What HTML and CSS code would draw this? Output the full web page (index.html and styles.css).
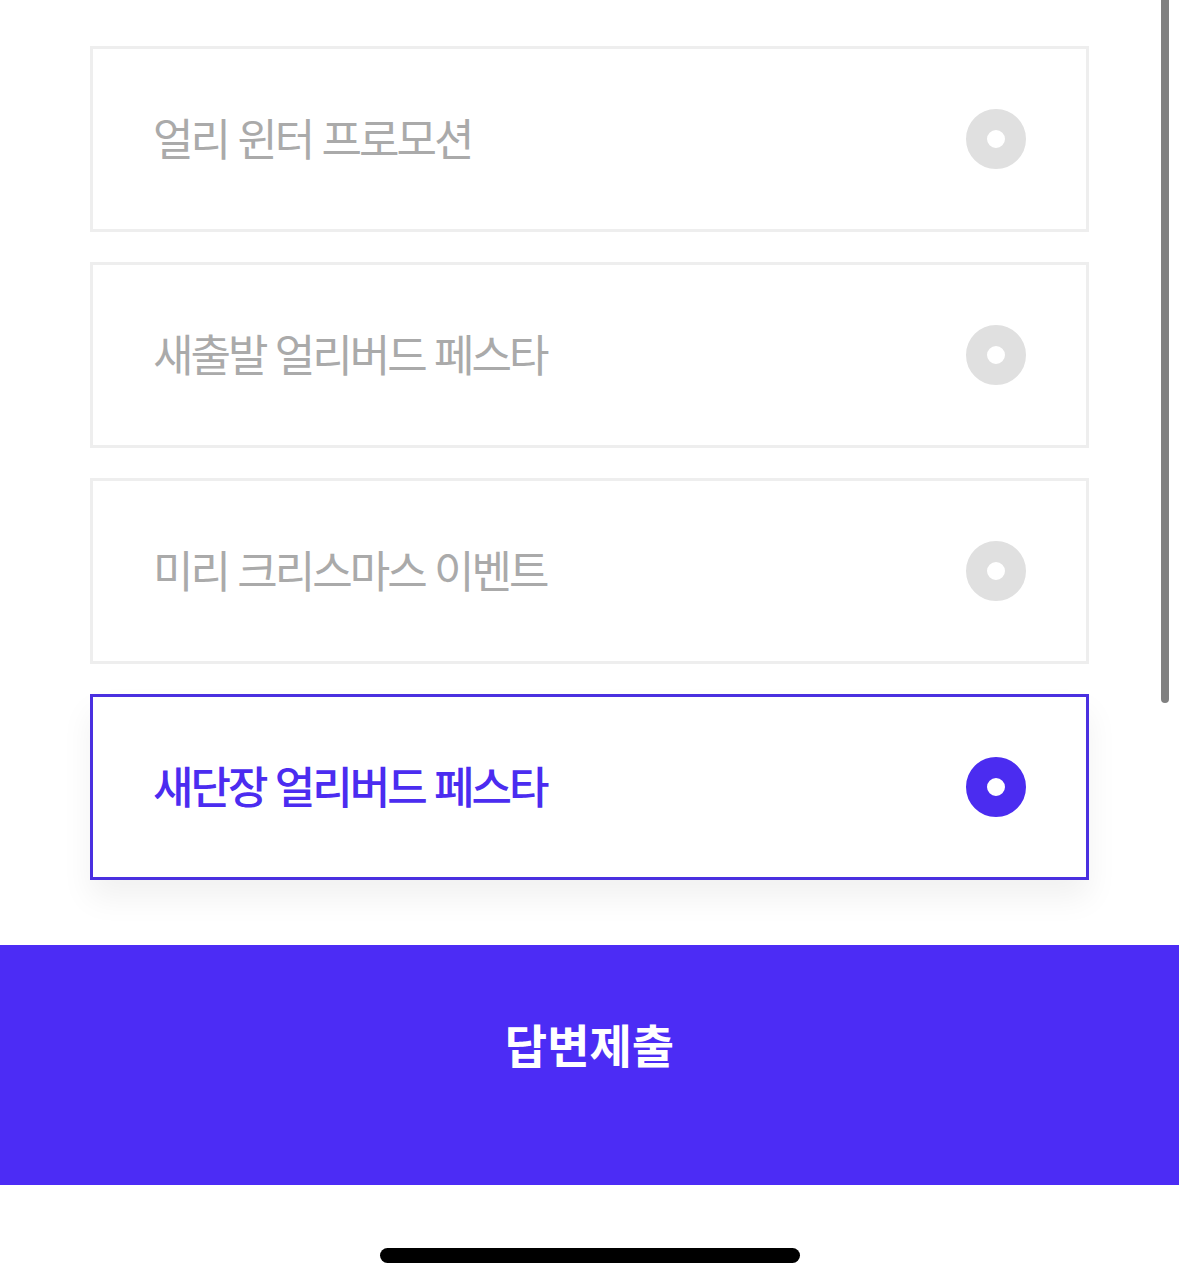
FILE: index.html
```html
<!DOCTYPE html>
<html lang="ko">
<head>
<meta charset="utf-8">
<link rel="stylesheet" href="styles.css">
</head>
<body>
<div class="screen">
  <div class="options">
    <div class="option">
      <span class="label">얼리 윈터 프로모션</span>
      <span class="radio"></span>
    </div>
    <div class="option">
      <span class="label">새출발 얼리버드 페스타</span>
      <span class="radio"></span>
    </div>
    <div class="option">
      <span class="label">미리 크리스마스 이벤트</span>
      <span class="radio"></span>
    </div>
    <div class="option selected">
      <span class="label">새단장 얼리버드 페스타</span>
      <span class="radio"></span>
    </div>
  </div>
  <button class="submit">답변제출</button>
  <div class="home-area"><span class="home-indicator"></span></div>
  <div class="scrollbar"></div>
</div>
</body>
</html>
```

FILE: styles.css
```css
html, body {
  margin: 0;
  padding: 0;
  background: #ffffff;
}
body {
  font-family: "Noto Sans CJK KR", "Noto Sans", sans-serif;
}
.screen {
  position: relative;
  width: 1179px;
  height: 1287px;
  overflow: hidden;
  display: flex;
  flex-direction: column;
}
.options {
  display: flex;
  flex-direction: column;
  gap: 30px;
  padding: 46px 90px 0;
}
.option {
  box-sizing: border-box;
  height: 186px;
  border: 3px solid #eeeeee;
  background: #fff;
  display: flex;
  align-items: center;
  justify-content: space-between;
  padding: 0 60px;
}
.label {
  font-size: 44px;
  letter-spacing: -3px;
  color: #aaaaaa;
  font-weight: 400;
  line-height: 1;
  padding-bottom: 5px;
}
.radio {
  box-sizing: border-box;
  width: 60px;
  height: 60px;
  border-radius: 50%;
  border: 21px solid #e0e0e0;
  background: #fff;
}
.option.selected {
  border-color: #4a30e0;
  box-shadow: 0 18px 30px rgba(0, 0, 0, 0.06);
}
.option.selected .label {
  color: #4b2cf0;
  font-weight: 500;
}
.option.selected .radio {
  border-color: #4b2cf0;
}
.submit {
  margin-top: 65px;
  height: 240px;
  width: 100%;
  border: 0;
  background: #4c2cf5;
  color: #ffffff;
  font-family: "Noto Sans CJK KR", "Noto Sans", sans-serif;
  font-size: 46px;
  font-weight: 700;
  letter-spacing: 0;
  display: flex;
  justify-content: center;
  align-items: flex-start;
  padding: 69px 0 0;
  line-height: 1.3;
}
.home-area {
  flex: 1;
  display: flex;
  justify-content: center;
  padding-top: 63px;
}
.home-indicator {
  width: 420px;
  height: 15px;
  border-radius: 8px;
  background: #000;
}
.scrollbar {
  position: absolute;
  top: 0;
  left: 1161px;
  width: 8px;
  height: 703px;
  background: #808080;
  border-radius: 0 0 4px 4px;
}
```
